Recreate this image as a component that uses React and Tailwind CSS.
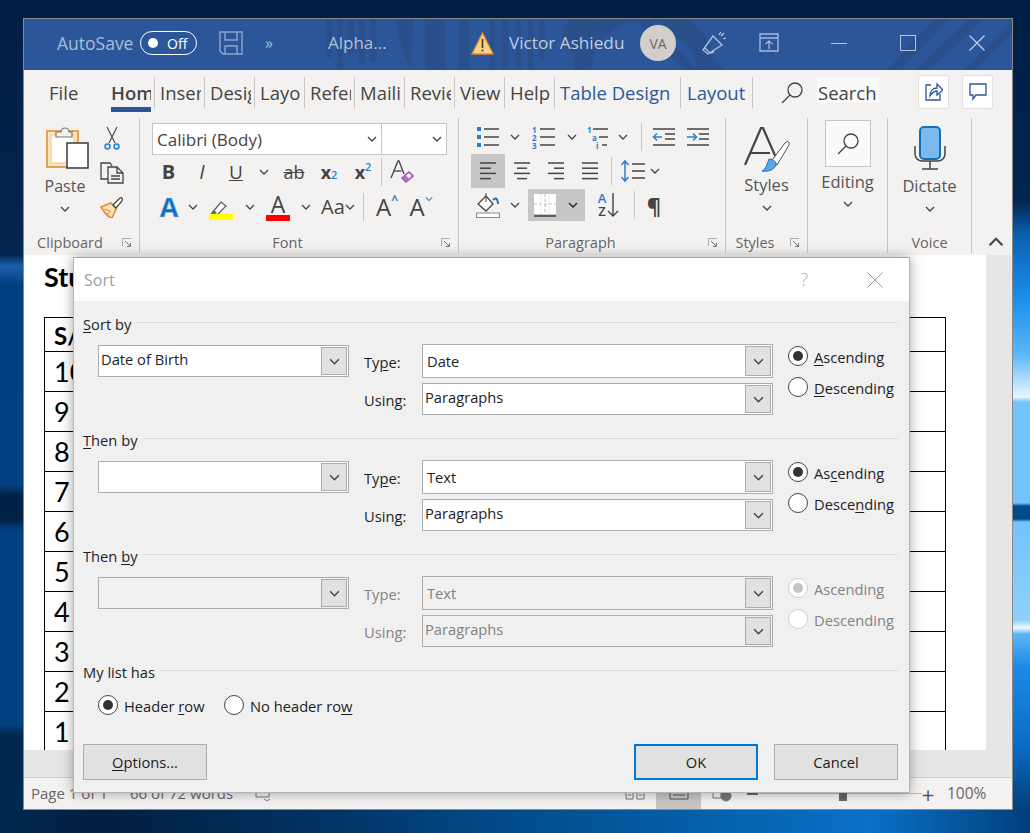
const ui = { fontFamily: '"Open Sans", "Noto Sans", sans-serif' };

function Chev({ className = "text-[#444]", size = 10 }) {
  return (
    <svg width={size} height={size} viewBox="0 0 10 10" fill="none" stroke="currentColor" strokeWidth="1.3" className={className}>
      <path d="M1 3l4 4 4-4" />
    </svg>
  );
}

function Launcher() {
  return (
    <svg width="10" height="10" viewBox="0 0 10 10" fill="none" stroke="#777" strokeWidth="1">
      <path d="M.5 8V.5H9" stroke="#aaa" />
      <path d="M3 3l5 5M8.5 5v3.5H5" />
    </svg>
  );
}

function Sep({ className = "h-[28px]" }) {
  return <div className={"w-px bg-[#c8c6c4] shrink-0 " + className} />;
}

function Cell({ className, children }) {
  return <div className={"flex items-center justify-center shrink-0 h-full " + className}>{children}</div>;
}

function Group({ className, label, launcher, children }) {
  return (
    <div className={"flex flex-col h-[135px] border-r border-[#c8c6c4] shrink-0 " + className}>
      <div className="h-[115px]">{children}</div>
      <div className="flex items-center h-[20px] text-[14.5px] text-[#666]">
        <div className={"flex-1 text-center " + (launcher ? "pr-[6px]" : "")}>{label}</div>
        {launcher && <div className="mr-[7px] flex"><Launcher /></div>}
      </div>
    </div>
  );
}

function AlignIcon({ rows }) {
  return (
    <svg width="22" height="22" viewBox="0 0 22 22" stroke="#444" strokeWidth="1.5">
      {rows.map(([x, w], i) => <path key={i} d={`M${x} ${3 + i * 5.2}h${w}`} />)}
    </svg>
  );
}

function Ribbon() {
  return (
    <div className="flex h-[140px] pt-[3px] bg-[#f3f2f1] shrink-0">
      <Group className="w-[116px]" label="Clipboard" launcher>
        <div className="flex pl-[5px]">
          <div className="w-[72px] flex flex-col items-center pt-[7px]">
            <svg className="ml-[6px]" width="44" height="44" viewBox="0 0 44 44">
              <rect x="1" y="6" width="31" height="36" fill="#fbe3c2" stroke="#e9a24f" strokeWidth="2" />
              <rect x="5" y="10" width="23" height="28" fill="#fff" stroke="#f0c48c" />
              <path d="M10 10V7h5a4 4 0 0 1 8 0h3v5H10z" fill="#f3f2f1" stroke="#777" strokeWidth="1.2" />
              <rect x="21" y="18" width="21" height="25" fill="#fff" stroke="#444" strokeWidth="1.6" />
            </svg>
            <div className="mt-[7px] h-[20px] leading-[20px] text-[16px] text-[#555]">Paste</div>
            <div className="mt-[9px] h-[8px] flex items-center"><Chev /></div>
          </div>
          <div className="w-[22px] flex flex-col items-center pt-[8px]">
            <svg width="16" height="24" viewBox="0 0 16 24" fill="none" stroke="#444" strokeWidth="1.1">
              <path d="M3 1l8 16M13 1L5 17" />
              <circle cx="3.5" cy="20.5" r="2.5" stroke="#2b7cd3" strokeWidth="1.5" />
              <circle cx="12.5" cy="20.5" r="2.5" stroke="#2b7cd3" strokeWidth="1.5" />
            </svg>
            <svg className="mt-[12px]" width="24" height="22" viewBox="0 0 24 22" fill="none" stroke="#444" strokeWidth="1.3">
              <path d="M8 17H1V1h9l2 3" />
              <path d="M8 5h9l6 6v10H8zM17 5v6h6M11 14h9M11 17h9" />
            </svg>
            <svg className="mt-[12px]" width="24" height="22" viewBox="0 0 24 22" fill="none">
              <path d="M1 11l10-4 5 6-4 9c-4-1-8-6-11-11z" fill="#fbe3c2" stroke="#e8892b" strokeWidth="1.6" />
              <path d="M4 13l6 2M7 18l4-3" stroke="#e8892b" />
              <path d="M13 9l7-7c2-1 3 1 2 3l-6 7z" fill="#fff" stroke="#444" strokeWidth="1.3" />
            </svg>
          </div>
        </div>
      </Group>

      <Group className="w-[319px]" label="Font" launcher>
        <div className="pl-[12px] pt-[5px]">
          <div className="flex h-[32px] w-[295px] bg-white border border-[#c8c6c4]">
            <div className="w-[229px] flex items-center border-r border-[#c8c6c4] pl-[4px] pr-[4px]">
              <span className="flex-1 text-[17px] text-[#444] pt-px">Calibri (Body)</span>
              <Chev />
            </div>
            <div className="flex-1 flex items-center justify-end pr-[4px]"><Chev /></div>
          </div>
          <div className="flex items-center h-[34px] text-[#444]">
            <Cell className="w-[33px] text-[20px] font-bold">B</Cell>
            <Cell className="w-[34px] text-[20px] italic">I</Cell>
            <Cell className="w-[34px] text-[19px] underline">U</Cell>
            <Cell className="w-[22px]"><Chev /></Cell>
            <Cell className="w-[38px] text-[18px] line-through">ab</Cell>
            <Cell className="w-[32px] text-[18px] font-bold">x<sub className="text-[11px] text-[#2b7cd3] font-semibold">2</sub></Cell>
            <Cell className="w-[36px] text-[18px] font-bold">x<sup className="text-[11px] text-[#2b7cd3] font-semibold">2</sup></Cell>
            <Sep />
            <Cell className="w-[38px]">
              <svg width="26" height="26" viewBox="0 0 26 26" fill="none">
                <path d="M3 19L10 2h1l5 13" stroke="#444" strokeWidth="1.3" />
                <path d="M5.5 12h8" stroke="#444" strokeWidth="1.3" />
                <path d="M14 19l7-6 4 4-7 6z" fill="#fff" stroke="#9c4fa8" strokeWidth="1.6" />
                <path d="M14 19l3.5-3 4 4L18 23z" fill="#b36cc0" />
              </svg>
            </Cell>
          </div>
          <div className="flex items-center h-[34px] mt-px text-[#444]">
            <Cell className="w-[34px] text-[27px] font-bold text-[#106ebe] [-webkit-text-stroke:0.6px_#9cc8ec]">A</Cell>
            <Cell className="w-[14px]"><Chev /></Cell>
            <Cell className="w-[42px] flex-col">
              <svg width="24" height="26" viewBox="0 0 24 26" fill="none">
                <path d="M3 19l9-11 5 4-9 9H3z" fill="#fff" stroke="#555" strokeWidth="1.2" />
                <path d="M2 20l3-4 3 3-2 1z" fill="#666" />
                <rect y="20" width="24" height="6" fill="#ff0" />
              </svg>
            </Cell>
            <Cell className="w-[15px]"><Chev /></Cell>
            <Cell className="w-[42px]">
              <div className="flex flex-col items-center">
                <span className="text-[23px] leading-[22px] text-[#444]">A</span>
                <div className="w-[24px] h-[6px] bg-[#f00]" />
              </div>
            </Cell>
            <Cell className="w-[14px]"><Chev /></Cell>
            <Cell className="w-[44px] text-[20px] justify-start pl-[8px]">Aa<Chev /></Cell>
            <Cell className="w-[12px]"><Sep /></Cell>
            <Cell className="w-[36px] text-[24px]">A<span className="text-[#2b7cd3] text-[12px] font-bold -mt-[14px]">^</span></Cell>
            <Cell className="w-[32px] text-[24px]">A<Chev className="text-[#2b7cd3] -mt-[16px]" size={8} /></Cell>
          </div>
        </div>
      </Group>

      <Group className="w-[267px]" label="Paragraph" launcher>
        <div className="pl-[12px] pt-[2px]">
          <div className="flex items-center h-[34px]">
            <Cell className="w-[34px]">
              <svg width="24" height="22" viewBox="0 0 24 22" stroke="#444" strokeWidth="1.5">
                <path d="M8 3h15M8 11h15M8 19h15" />
                <path d="M1 1h4v4H1zM1 9h4v4H1zM1 17h4v4H1z" fill="#2b7cd3" stroke="none" />
              </svg>
            </Cell>
            <Cell className="w-[20px]"><Chev /></Cell>
            <Cell className="w-[38px]">
              <svg width="24" height="24" viewBox="0 0 24 24" stroke="#444" strokeWidth="1.5">
                <path d="M8 4h15M8 12h15M8 20h15" />
                <text x="0" y="8" fontSize="8" fontWeight="700" fill="#2b7cd3" stroke="none">1</text>
                <text x="0" y="16" fontSize="8" fontWeight="700" fill="#2b7cd3" stroke="none">2</text>
                <text x="0" y="24" fontSize="8" fontWeight="700" fill="#2b7cd3" stroke="none">3</text>
              </svg>
            </Cell>
            <Cell className="w-[18px]"><Chev /></Cell>
            <Cell className="w-[36px]">
              <svg width="24" height="24" viewBox="0 0 24 24" stroke="#444" strokeWidth="1.5">
                <path d="M6 4h15M12 12h9M15 20h5" />
                <text x="0" y="8" fontSize="8" fontWeight="700" fill="#2b7cd3" stroke="none">1</text>
                <text x="5" y="16" fontSize="8" fontWeight="700" fill="#2b7cd3" stroke="none">a</text>
                <text x="9" y="24" fontSize="8" fontWeight="700" fill="#2b7cd3" stroke="none">i</text>
              </svg>
            </Cell>
            <Cell className="w-[12px]"><Chev /></Cell>
            <Cell className="w-[13px] justify-end"><Sep /></Cell>
            <Cell className="w-[44px]">
              <svg width="24" height="20" viewBox="0 0 24 20" fill="none" stroke="#444" strokeWidth="1.5">
                <path d="M1 2h22M13 7h10M13 12h10M1 18h22" />
                <path d="M10 10H2M5 6.5L1.5 10 5 13.5" stroke="#2b7cd3" />
              </svg>
            </Cell>
            <Cell className="w-[34px] justify-start">
              <svg width="24" height="20" viewBox="0 0 24 20" fill="none" stroke="#444" strokeWidth="1.5">
                <path d="M1 2h22M13 7h10M13 12h10M1 18h22" />
                <path d="M1 10h8M7 6.5l3.5 3.5L7 13.5" stroke="#2b7cd3" />
              </svg>
            </Cell>
          </div>
          <div className="flex items-center h-[34px]">
            <Cell className="w-[34px] bg-[#c6c6c6] h-[33px]"><AlignIcon rows={[[3, 16], [3, 11], [3, 16], [3, 11]]} /></Cell>
            <Cell className="w-[34px]"><AlignIcon rows={[[3, 16], [6, 10], [3, 16], [6, 10]]} /></Cell>
            <Cell className="w-[34px]"><AlignIcon rows={[[3, 16], [9, 10], [3, 16], [9, 10]]} /></Cell>
            <Cell className="w-[34px]"><AlignIcon rows={[[3, 16], [3, 16], [3, 16], [3, 16]]} /></Cell>
            <Cell className="w-[4px]" />
            <Sep />
            <Cell className="w-[4px]" />
            <Cell className="w-[34px]">
              <svg width="26" height="24" viewBox="0 0 26 24" fill="none" stroke="#444" strokeWidth="1.5">
                <path d="M12 5h13M12 12h13M12 19h13" />
                <path d="M5 3v18M1.5 6L5 2l3.5 4M1.5 18L5 22l3.5-4" stroke="#2b7cd3" />
              </svg>
            </Cell>
            <Cell className="w-[10px]"><Chev /></Cell>
          </div>
          <div className="flex items-center h-[34px]">
            <Cell className="w-[34px]">
              <svg width="24" height="26" viewBox="0 0 24 26" fill="none">
                <path d="M2 12l8-8 7 8-7 7z" fill="#fff" stroke="#444" strokeWidth="1.3" />
                <path d="M10 1v9" stroke="#444" />
                <path d="M17 8c3-3 5-1 5 4" stroke="#106ebe" strokeWidth="2" />
                <rect x="0.5" y="21" width="23" height="4.5" fill="#fff" stroke="#888" />
              </svg>
            </Cell>
            <Cell className="w-[20px]"><Chev /></Cell>
            <div className="w-[3px]" />
            <div className="flex items-center w-[57px] h-[32px] bg-[#c6c6c6]">
              <div className="w-[33px] h-full flex items-center justify-center">
                <svg width="24" height="24" viewBox="0 0 24 24" fill="none">
                  <rect x="1" y="1" width="22" height="20" fill="#fff" />
                  <path d="M1 11h22M12 1v20" stroke="#bbb" strokeDasharray="3 2" />
                  <path d="M8 1v20M16 1v20" stroke="#e8e8e8" />
                  <path d="M1 23h22" stroke="#444" strokeWidth="1.6" />
                </svg>
              </div>
              <div className="flex-1 flex justify-center"><Chev className="text-[#222]" /></div>
            </div>
            <div className="w-[4px]" />
            <Cell className="w-[39px]">
              <div className="flex items-center">
                <div className="flex flex-col text-[13px] leading-[13px] font-semibold items-center">
                  <span className="text-[#2b7cd3]">A</span>
                  <span className="text-[#444]">Z</span>
                </div>
                <svg className="ml-[1px]" width="12" height="26" viewBox="0 0 12 26" fill="none" stroke="#444" strokeWidth="1.4">
                  <path d="M6 1v23M1 19l5 5 5-5" />
                </svg>
              </div>
            </Cell>
            <Cell className="w-[7px] justify-end"><Sep /></Cell>
            <Cell className="w-[38px] text-[22px] font-bold text-[#444]">¶</Cell>
          </div>
        </div>
      </Group>

      <Group className="w-[82px]" label="Styles" launcher>
        <div className="flex flex-col items-center pt-[9px]">
          <svg width="46" height="46" viewBox="0 0 46 46" fill="none">
            <path d="M1 38L17 1h2l14 32M7 26h19" stroke="#444" strokeWidth="2.2" />
            <path d="M26 36L41 16c3-3 5-1 4 2L33 38z" fill="#fff" stroke="#555" />
            <path d="M25 32c4 0 8 3 7 6-2 5-8 7-14 6 4-2 5-7 7-12z" fill="#5ca6e5" stroke="#106ebe" />
          </svg>
          <div className="mt-[2px] h-[20px] leading-[20px] text-[16.5px] text-[#555]">Styles</div>
          <div className="mt-[9px] h-[8px] flex items-center"><Chev /></div>
        </div>
      </Group>

      <Group className="w-[80px]" label="">
        <div className="flex flex-col items-center pt-[2px]">
          <div className="w-[46px] h-[47px] bg-[#fafafa] border border-[#c8c6c4] flex items-center justify-center">
            <SearchIcon />
          </div>
          <div className="mt-[5px] h-[20px] leading-[20px] text-[16.5px] text-[#555]">Editing</div>
          <div className="mt-[8px] h-[8px] flex items-center"><Chev /></div>
        </div>
      </Group>

      <Group className="w-[84px]" label="Voice">
        <div className="flex flex-col items-center pt-[8px]">
          <svg width="32" height="44" viewBox="0 0 32 44" fill="none">
            <rect x="6" y="1" width="20" height="32" rx="4" fill="#7db8ec" stroke="#106ebe" strokeWidth="2" />
            <path d="M1 20v8a7 7 0 0 0 7 7h16a7 7 0 0 0 7-7v-8M16 35v8M8 43h16" stroke="#444" strokeWidth="1.5" />
          </svg>
          <div className="mt-[6px] h-[20px] leading-[20px] text-[16.5px] text-[#555]">Dictate</div>
          <div className="mt-[9px] h-[8px] flex items-center"><Chev /></div>
        </div>
      </Group>

      <div className="flex items-end pl-[16px] pb-[5px]">
        <Chev className="text-[#444] rotate-180" size={16} />
      </div>
    </div>
  );
}

function SearchIcon() {
  return (
    <svg width="22" height="22" viewBox="0 0 22 22" fill="none" stroke="#444" strokeWidth="1.3">
      <circle cx="14" cy="8" r="7" />
      <path d="M9 13l-8 8" />
    </svg>
  );
}

function Tab({ children }) {
  return (
    <div className="w-[50px] h-[31px] border-r border-[#c8c6c4] pl-[5px] shrink-0">
      <div className="w-[41px] overflow-hidden whitespace-nowrap leading-[31px] text-[18.5px] text-[#444]">{children}</div>
    </div>
  );
}

function TabBar() {
  return (
    <div className="flex items-start h-[45px] pt-[7px] bg-[#f3f2f1] shrink-0">
      <div className="w-[81px] pl-[25px] leading-[31px] text-[18.5px] text-[#444]">File</div>
      <div className="w-[50px] h-[35px] pl-[6px] shrink-0 relative">
        <div className="w-[40px] h-[35px] overflow-hidden whitespace-nowrap leading-[31px] text-[18.5px] font-semibold text-[#444] border-b-[5px] border-[#2b579a]">Home</div>
        <div className="absolute right-0 top-0 w-px h-[31px] bg-[#c8c6c4]" />
      </div>
      <Tab>Insert</Tab>
      <Tab>Design</Tab>
      <Tab>Layout</Tab>
      <Tab>References</Tab>
      <Tab>Mailings</Tab>
      <Tab>Review</Tab>
      <Tab>View</Tab>
      <Tab>Help</Tab>
      <div className="w-[126px] h-[31px] border-r border-[#c8c6c4] pl-[5px] leading-[31px] text-[18.5px] text-[#2b579a] whitespace-nowrap shrink-0">Table Design</div>
      <div className="w-[72px] h-[31px] border-r border-[#c8c6c4] pl-[6px] leading-[31px] text-[18.5px] text-[#2b579a] shrink-0">Layout</div>
      <div className="ml-[28px] mt-[5px] flex"><SearchIcon /></div>
      <div className="ml-[14px] w-[62px] h-[26px] bg-[#f9f9f9] leading-[31px] text-[18.5px] text-[#444] pl-px">Search</div>
      <div className="ml-[39px] -mt-[2px] w-[31px] h-[34px] bg-white border border-[#e1dfdd] rounded-[3px] flex items-center justify-center">
        <svg width="18" height="20" viewBox="0 0 18 20" fill="none" stroke="#2b579a" strokeWidth="1.3">
          <path d="M6 3H1v15h14v-6" />
          <path d="M5 14c0-5 3-8 7-8V2l6 6-6 5V9c-3 0-5 2-7 5z" />
        </svg>
      </div>
      <div className="ml-[13px] -mt-[2px] w-[31px] h-[34px] bg-white border border-[#e1dfdd] rounded-[3px] flex items-center justify-center">
        <svg width="18" height="18" viewBox="0 0 18 18" fill="none" stroke="#2b579a" strokeWidth="1.3">
          <path d="M1 1h16v11H7l-3 4v-4H1z" />
        </svg>
      </div>
    </div>
  );
}

function TitleBar() {
  return (
    <div className="relative flex items-center h-[51px] bg-[#2b579a] shrink-0 overflow-hidden pb-[3px]">
      <svg className="absolute left-0 top-0" width="990" height="51" viewBox="0 0 990 51" fill="#2a4f8a" stroke="none">
        <path d="M302 0h6v39h-6zM313 0h6v50h-6zM324 0h6v36h-6zM335 0h6v44h-6zM346 0h6v43h-6zM372 0c2 20 8 36 15 50l2-50zM401 0h20v51h-20zM435 0h10v51h-10zM466 0h5v51h-5zM478 0h6v51h-6zM492 0h5v51h-5zM504 0h5v51h-5zM515 0h6v40h-6z" />
        <circle cx="557" cy="16" r="19" />
        <path d="M610 0l50 51h14L624 0zM636 0l50 51h14L650 0z" />
        <path d="M950 51L990 12V0L940 51zM905 51L960 0h-14L891 51zM877 51L925 0h-14L863 51z" />
        <circle cx="620" cy="55" r="62" fill="none" stroke="#2a4f8a" strokeWidth="18" />
      </svg>
      <div className="relative flex items-center w-full">
        <div className="ml-[33px] w-[76px] text-[17.5px] text-[#a9bcd8] whitespace-nowrap">AutoSave</div>
        <div className="ml-[7px] w-[57px] h-[24px] border border-white rounded-full flex items-center pl-[7px]">
          <div className="w-[10px] h-[10px] rounded-full bg-white" />
          <span className="ml-[9px] text-[14px] text-white">Off</span>
        </div>
        <svg className="ml-[22px]" width="24" height="24" viewBox="0 0 24 24" fill="none" stroke="#8ea6cc" strokeWidth="1.4">
          <path d="M1 1h22v22H4l-3-3zM6 1v8h12V1M6 23v-8h12v8" />
        </svg>
        <div className="ml-[22px] w-[12px] text-[#a9bcd8] text-[16px] leading-none">»</div>
        <div className="ml-[51px] w-[60px] text-[17px] text-[#b0c1da] whitespace-nowrap">Alpha...</div>
        <svg className="ml-[83px]" width="23" height="23" viewBox="0 0 23 23">
          <path d="M11.5 1L22 22H1z" fill="#fbd48c" stroke="#e8892b" strokeWidth="1.3" />
          <path d="M10.6 7h1.8v9h-1.8zM10.6 17.5h1.8v2h-1.8z" fill="#5a4420" />
        </svg>
        <div className="ml-[15px] w-[118px] text-[17.2px] text-[#c0cde0] whitespace-nowrap">Victor Ashiedu</div>
        <div className="ml-[13px] w-[36px] h-[36px] rounded-full bg-[#d2cfcb] flex items-center justify-center text-[14px] text-[#6f6a63]">VA</div>
        <svg className="ml-[26px]" width="26" height="26" viewBox="0 0 26 26" fill="none" stroke="#b4c4dc" strokeWidth="1.3">
          <path d="M1 20L11 6l9 9-14 9zM3 18l5 5M7 22a3 3 0 0 0 5-1" />
          <path d="M17 5l2-3M21 9l3-1M19 6l3-3" />
        </svg>
        <svg className="ml-[31px]" width="20" height="20" viewBox="0 0 20 20" fill="none" stroke="#a9bcd8" strokeWidth="1.3">
          <path d="M1 1h18v17H1zM1 5h18M10 16V8M6.5 11L10 8l3.5 3" />
        </svg>
        <div className="ml-[52px] w-[16px] h-px bg-[#b4c4dc]" />
        <div className="ml-[53px] w-[16px] h-[16px] border border-[#b4c4dc]" />
        <svg className="ml-[53px]" width="16" height="16" viewBox="0 0 16 16" stroke="#c5d2e5" strokeWidth="1.2">
          <path d="M.5.5l15 15M15.5.5l-15 15" />
        </svg>
      </div>
    </div>
  );
}

function Doc() {
  const nums = ["10", "9", "8", "7", "6", "5", "4", "3", "2", "1"];
  return (
    <div className="h-[522px] bg-[#e6e6e6] shrink-0">
      <div className="w-[962px] h-[495px] bg-white overflow-hidden pl-[20px] pt-[4px]" style={{ fontFamily: "Lato, sans-serif" }}>
        <div className="h-[58px] text-[27px] font-bold leading-[36px] text-black">Students</div>
        <div className="w-[902px] border-x border-t border-black">
          <div className="h-[34px] border-b border-black pl-[9px] text-[24px] font-bold leading-[36px] text-black">S/N</div>
          {nums.map((n) => (
            <div key={n} className="h-[40px] border-b border-black pl-[9px] text-[27px] leading-[40px] text-black">{n}</div>
          ))}
        </div>
      </div>
    </div>
  );
}

function StatusBar() {
  return (
    <div className="flex items-center h-[32px] bg-[#f3f2f1] border-t border-[#cfcdcb] text-[15px] text-[#666] flex-1">
      <span className="ml-[7px] w-[99px] whitespace-nowrap">Page 1 of 1</span>
      <span className="w-[125px] whitespace-nowrap">66 of 72 words</span>
      <svg width="22" height="14" viewBox="0 0 22 14" fill="none" stroke="#777"><path d="M1 1h13v9H1zM9 12l3 2 3-2M15 5l4-3 2 2" /></svg>
      <svg className="ml-[348px]" width="20" height="14" viewBox="0 0 20 14" fill="none" stroke="#777"><path d="M1 2h7v10H1zM12 2h7v10h-7zM3 5h3M14 5h3M3 8h3M14 8h3" /></svg>
      <div className="ml-[11px] w-[45px] h-[31px] bg-[#c6c6c6] flex items-center justify-center">
        <svg width="20" height="14" viewBox="0 0 20 14" fill="none" stroke="#555"><path d="M1 2h18v10H1zM4 5h12M4 8h12" /></svg>
      </div>
      <svg className="ml-[11px]" width="20" height="16" viewBox="0 0 20 16" fill="none" stroke="#777"><path d="M1 2h8v10H1z" /><circle cx="14" cy="10" r="5" fill="#777" /></svg>
      <div className="ml-[15px] w-[11px] h-[2px] bg-[#666]" />
      <div className="relative ml-[1px] w-[163px] h-px bg-[#bbb]">
        <div className="absolute left-[80px] -top-[7px] w-[8px] h-[15px] bg-[#666]" />
      </div>
      <span className="text-[22px] leading-none text-[#555] -ml-[1px] w-[14px] text-center">+</span>
      <span className="ml-[12px] text-[15.5px]">100%</span>
    </div>
  );
}

function Combo({ className, text, textClass = "pl-[2px] -mt-[3px]", disabled }) {
  return (
    <div className={"flex border border-[#adadad] shrink-0 " + (disabled ? "bg-[#f0f0f0] " : "bg-white ") + className}>
      <div className={"flex-1 flex items-center text-[14.7px] " + (disabled ? "text-[#838383] " : "text-[#1e1e1e] ") + textClass}>{text}</div>
      <div className="m-px w-[26px] bg-[#e1e1e1] border border-[#adadad] flex items-center justify-center text-[#555]">
        <Chev size={11} />
      </div>
    </div>
  );
}

function Radio({ label, checked, disabled, className = "" }) {
  return (
    <div className={"flex items-center h-[20px] " + className}>
      <div className={"w-[20px] h-[20px] rounded-full flex items-center justify-center shrink-0 border " + (disabled ? "border-[#cfcfcf] bg-white" : "border-[#444] bg-white")}>
        {checked && <div className={"w-[10px] h-[10px] rounded-full " + (disabled ? "bg-[#c4c4c4]" : "bg-[#333]")} />}
      </div>
      <span className={"ml-[6px] pt-[3px] text-[14.7px] whitespace-nowrap " + (disabled ? "text-[#838383]" : "text-[#1e1e1e]")}>{label}</span>
    </div>
  );
}

function Legend({ children }) {
  return (
    <div className="flex items-center h-[20px] text-[14.7px] text-[#1e1e1e]">
      <span className="whitespace-nowrap pt-[2px]">{children}</span>
      <div className="flex-1 ml-[5px] h-px bg-[#dcdcdc] -mt-[2px]" />
    </div>
  );
}

function U({ children }) {
  return <span className="underline underline-offset-2">{children}</span>;
}

function SortRow({ legend, value, typeLabel, typeValue, usingLabel, asc, desc, disabled }) {
  const labelClass = "w-[58px] pt-[2px] text-[14.7px] " + (disabled ? "text-[#838383]" : "text-[#1e1e1e]");
  return (
    <div className="h-[116px]">
      <Legend>{legend}</Legend>
      <div className="flex pl-[15px] mt-[11px]">
        <Combo className="w-[251px] h-[32px] mt-px" text={value} disabled={disabled} />
        <div className="ml-[15px]">
          <div className="flex items-center h-[34px]">
            <div className={labelClass}>{typeLabel}</div>
            <Combo className="w-[351px] h-[34px]" text={typeValue} textClass="pl-[4px] pt-px" disabled={disabled} />
          </div>
          <div className="flex items-center h-[32px] mt-[5px]">
            <div className={labelClass}>{usingLabel}</div>
            <Combo className="w-[351px] h-[32px]" text="Paragraphs" disabled={disabled} />
          </div>
        </div>
        <div className="ml-[15px] pt-[2px] flex flex-col gap-[11px]">
          <Radio label={asc} checked disabled={disabled} />
          <Radio label={desc} disabled={disabled} />
        </div>
      </div>
    </div>
  );
}

function SortDialog() {
  return (
    <div className="absolute left-[73px] top-[257px] w-[837px] h-[536px] bg-[#f0f0f0] border border-[#b4b4b4] border-t-[#a8a8a8] shadow-[0_0_12px_rgba(0,0,0,0.35)] flex flex-col" style={ui}>
      <div className="flex items-center h-[43px] bg-white shrink-0">
        <span className="ml-[10px] text-[16px] text-[#9aa0a6]">Sort</span>
        <span className="ml-auto text-[18px] font-light text-[#aaa]">?</span>
        <svg className="ml-[59px] mr-[26px]" width="16" height="16" viewBox="0 0 16 16" stroke="#999" strokeWidth="1">
          <path d="M.5.5l15 15M15.5.5l-15 15" />
        </svg>
      </div>
      <div className="pt-[12px] pl-[9px] pr-[11px]">
        <SortRow
          legend={<><U>S</U>ort by</>}
          value="Date of Birth"
          typeLabel={<>Ty<U>p</U>e:</>}
          typeValue="Date"
          usingLabel="Using:"
          asc={<><U>A</U>scending</>}
          desc={<><U>D</U>escending</>}
        />
        <SortRow
          legend={<><U>T</U>hen by</>}
          value=""
          typeLabel={<>Ty<U>p</U>e:</>}
          typeValue="Text"
          usingLabel="Using:"
          asc={<>As<U>c</U>ending</>}
          desc={<>Desce<U>n</U>ding</>}
        />
        <SortRow
          legend={<>Then <U>b</U>y</>}
          value=""
          typeLabel="Type:"
          typeValue="Text"
          usingLabel="Using:"
          asc="Ascending"
          desc="Descending"
          disabled
        />
        <Legend>My list has</Legend>
        <div className="flex pl-[15px] mt-[14px]">
          <Radio className="w-[126px]" label={<>Header <U>r</U>ow</>} checked />
          <Radio label={<>No header ro<U>w</U></>} />
        </div>
        <div className="flex mt-[29px] text-[14.7px] text-[#1e1e1e]">
          <div className="w-[124px] h-[36px] pt-px bg-[#e1e1e1] border border-[#adadad] flex items-center justify-center"><span><U>O</U>ptions...</span></div>
          <div className="ml-auto w-[124px] h-[36px] pt-px bg-[#e1e1e1] border-2 border-[#0078d7] flex items-center justify-center">OK</div>
          <div className="ml-[16px] w-[124px] h-[36px] pt-px bg-[#e1e1e1] border border-[#adadad] flex items-center justify-center">Cancel</div>
        </div>
      </div>
    </div>
  );
}

function Wallpaper() {
  return (
    <>
      <div className="absolute left-0 top-0 w-[24px] h-[833px] bg-[linear-gradient(180deg,#011f45_0px,#01264f_255px,#1c5fab_266px,#033f7f_285px,#02407f_485px,#012247_495px,#012247_520px,#02407f_530px,#02407f_725px,#012850_735px,#012850_833px)]" />
      <div className="absolute left-[1012px] top-0 w-[18px] h-[833px] bg-[linear-gradient(180deg,#011f45_0px,#012650_200px,#0a60b0_235px,#1a90ec_300px,#5bb8f8_355px,#e8f6ff_397px,#72c4fb_402px,#72c4fb_503px,#024a8c_506px,#024a8c_519px,#72c4fb_522px,#8fd0fb_620px,#eef8ff_628px,#5cb6f6_634px,#1a8ae6_668px,#0a6cc4_745px,#023f7a_810px,#023566_833px)]" />
      <div className="absolute left-0 top-[809px] w-[1030px] h-[24px] bg-[linear-gradient(90deg,#012850_0px,#011f40_100px,#02305f_300px,#024a88_500px,#0560a8_700px,#0a70c8_870px,#023f7a_1030px)]" />
    </>
  );
}

export default function App() {
  return (
    <div className="relative w-[1030px] h-[833px] overflow-hidden bg-[#011f45]">
      <Wallpaper />
      <div className="absolute left-[23px] top-[18px] w-[990px] h-[792px] border border-[#8a8a8a] flex flex-col" style={ui}>
        <TitleBar />
        <TabBar />
        <Ribbon />
        <Doc />
        <StatusBar />
      </div>
      <SortDialog />
    </div>
  );
}
